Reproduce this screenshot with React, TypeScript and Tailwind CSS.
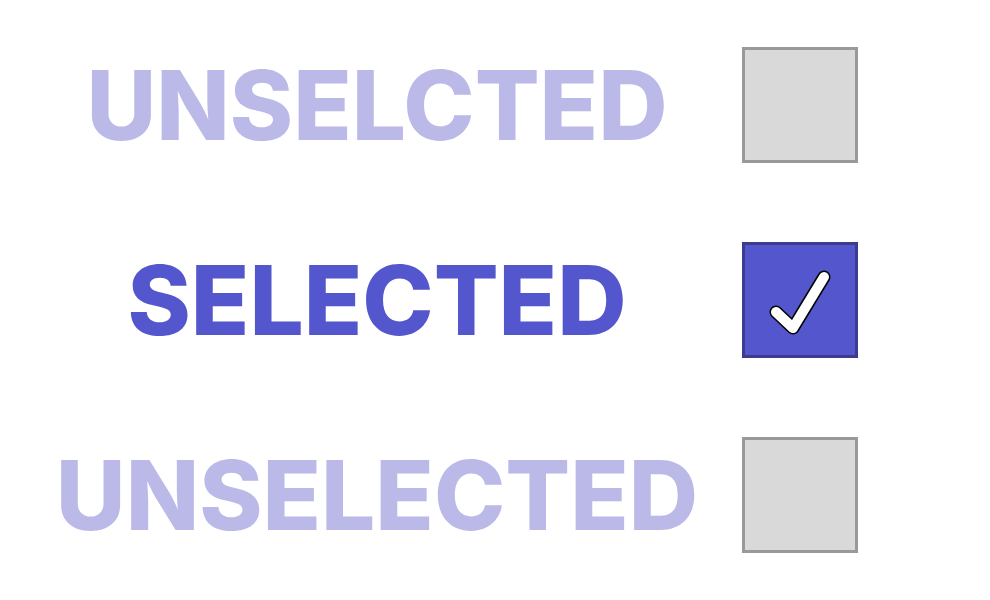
const rows = [
  { label: "UNSELCTED", checked: false },
  { label: "SELECTED", checked: true },
  { label: "UNSELECTED", checked: false },
];

function Check() {
  return (
    <svg width="116" height="116" viewBox="0 0 116 116" className="absolute -left-[3px] -top-[3px]">
      <path
        d="M34 70 L51 86 L82 35"
        fill="none"
        stroke="#000"
        strokeWidth="13"
        strokeLinecap="round"
        strokeLinejoin="round"
      />
      <path
        d="M34 70 L51 86 L82 35"
        fill="none"
        stroke="#fff"
        strokeWidth="10"
        strokeLinecap="round"
        strokeLinejoin="round"
      />
    </svg>
  );
}

export default function App() {
  return (
    <div className="w-[990px] h-[600px] bg-white pt-[7px] font-['Inter',sans-serif]">
      {rows.map((row, idx) => (
        <div key={idx} className="flex items-center h-[195px]">
          <div className="w-[742px] pl-[12px] text-center">
            <span
              className={
                "text-[96px] font-extrabold leading-none " +
                (row.checked ? "text-[#5356cc]" : "text-[#bbb9e8]")
              }
            >
              {row.label}
            </span>
          </div>
          <div
            className={
              "relative w-[116px] h-[116px] border-[3px] " +
              (row.checked ? "bg-[#5356cc] border-[#3b3b8f]" : "bg-[#d9d9d9] border-[#999999]")
            }
          >
            {row.checked && <Check />}
          </div>
        </div>
      ))}
    </div>
  );
}
